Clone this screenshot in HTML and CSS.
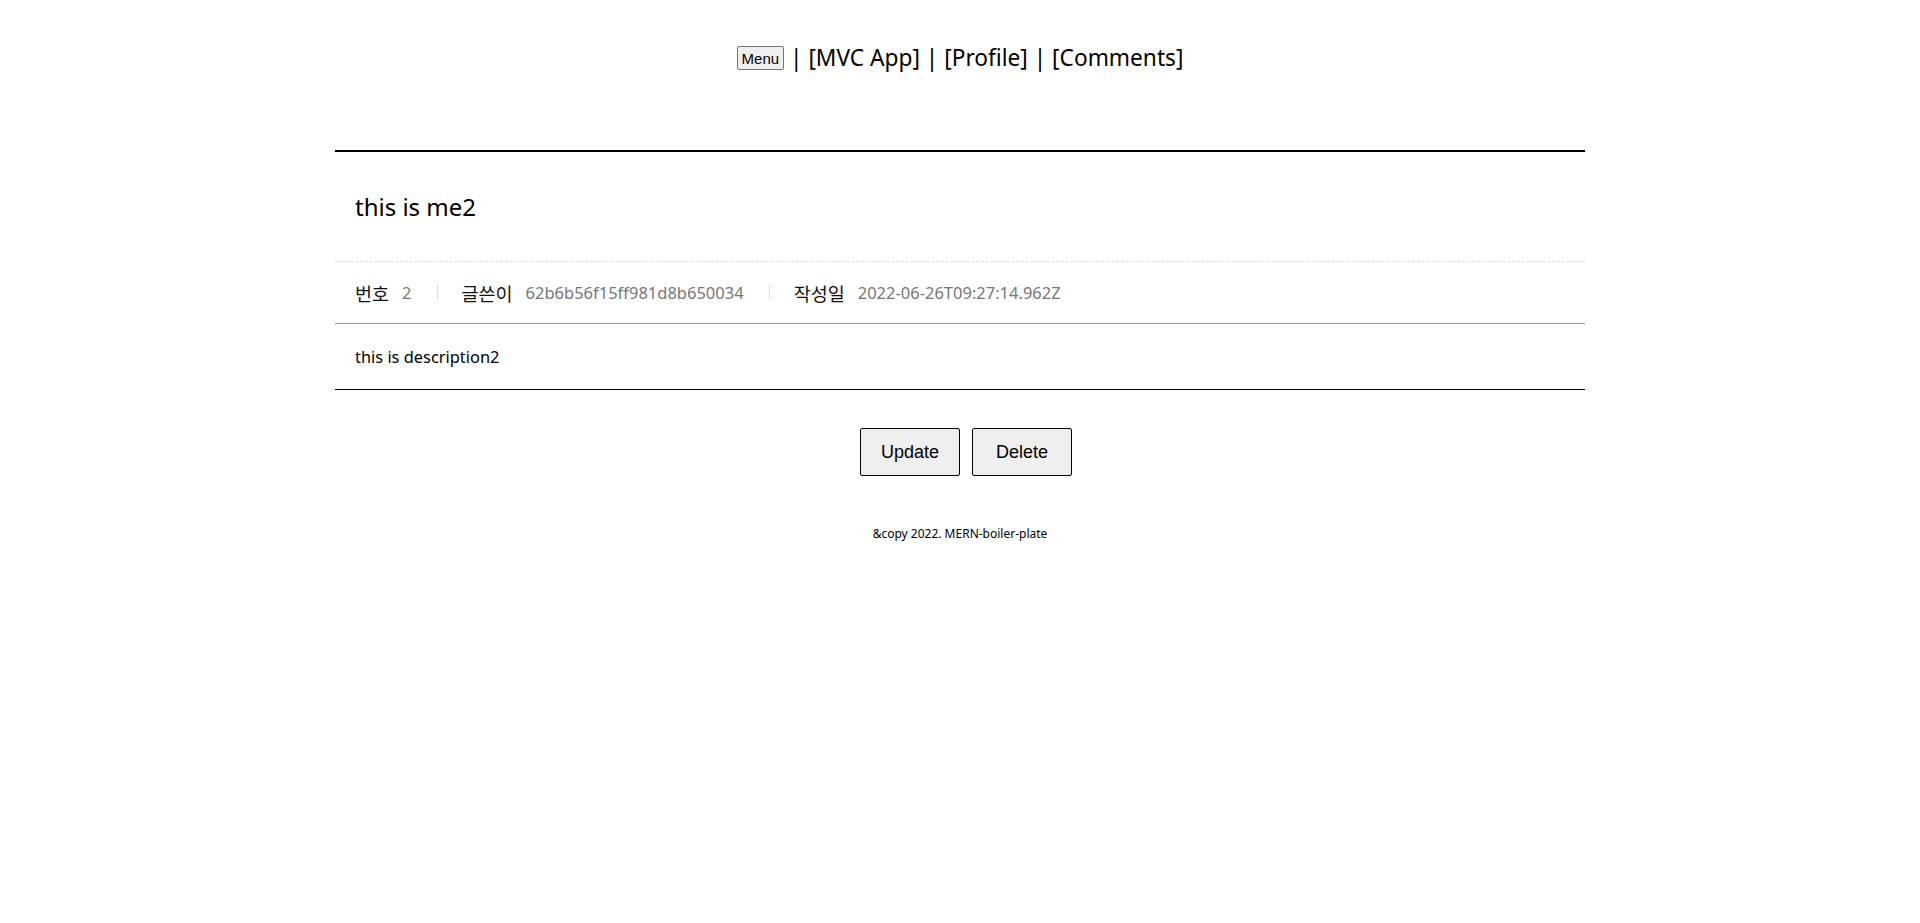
FILE: index.html
```html
<!DOCTYPE html>
<html lang="ko">
<head>
<meta charset="utf-8">
<title>MERN-boiler-plate</title>
<link rel="stylesheet" href="styles.css">
</head>
<body>
<header class="nav">
  <button class="menu-btn">Menu</button> | [MVC App] | [Profile] | [Comments]
</header>
<main class="board">
  <div class="board-title">this is me2</div>
  <div class="board-info">
    <dl class="info-item">
      <dt>번호</dt>
      <dd>2</dd>
    </dl>
    <dl class="info-item">
      <dt>글쓴이</dt>
      <dd>62b6b56f15ff981d8b650034</dd>
    </dl>
    <dl class="info-item">
      <dt>작성일</dt>
      <dd>2022-06-26T09:27:14.962Z</dd>
    </dl>
  </div>
  <div class="board-cont">this is description2</div>
</main>
<div class="actions">
  <button class="act-btn">Update</button>
  <button class="act-btn">Delete</button>
</div>
<footer class="footer">&amp;copy 2022. MERN-boiler-plate</footer>
</body>
</html>
```

FILE: styles.css
```css
* { box-sizing: border-box; }
html, body {
  margin: 0;
  padding: 0;
  background: #fff;
  color: #000;
  font-family: "Noto Sans", "Noto Sans CJK KR", sans-serif;
}
.nav {
  text-align: center;
  font-size: 22.7px;
  line-height: 32px;
  padding-top: 42px;
  height: 150px;
}
.menu-btn {
  font-family: "Liberation Sans", Arial, sans-serif;
  font-size: 15px;
  padding: 3px 4px 2px;
  border: 1px solid #767676;
  border-radius: 2px;
  background: #efefef;
  color: #000;
  vertical-align: 2px;
}
.board {
  width: 1250px;
  margin: 0 auto;
  border-top: 2px solid #000;
  border-bottom: 1px solid #000;
}
.board-title {
  padding: 0 20px;
  height: 110px;
  display: flex;
  align-items: center;
  font-size: 24px;
  border-bottom: 1px dashed #ddd;
}
.board-info {
  display: flex;
  height: 62px;
  align-items: center;
  padding: 0 20px;
  border-bottom: 1px solid #999;
}
.info-item {
  display: flex;
  align-items: center;
  margin: 0;
  font-size: 18.5px;
  color: #111;
  position: relative;
  padding: 0 25px;
}
.info-item:first-child { padding-left: 0; }
.info-item + .info-item::before {
  content: "";
  position: absolute;
  left: 0;
  top: 50%;
  width: 1px;
  height: 14px;
  margin-top: -8px;
  background: #ddd;
}
.info-item dt { margin: 0; }
.info-item dd {
  margin: 0 0 0 13px;
  font-size: 16.5px;
  color: #777;
}
.board-cont {
  padding: 0 20px;
  height: 65px;
  display: flex;
  align-items: center;
  font-size: 16.4px;
}
.actions {
  display: flex;
  justify-content: center;
  padding-top: 38px;
}
.act-btn {
  width: 100px;
  height: 48px;
  margin-left: 12px;
  font-family: "Liberation Sans", Arial, sans-serif;
  font-size: 18px;
  background: #efefef;
  border: 1px solid #000;
  border-radius: 2px;
  color: #000;
}
.footer {
  text-align: center;
  font-size: 12px;
  padding-top: 49px;
}
```
